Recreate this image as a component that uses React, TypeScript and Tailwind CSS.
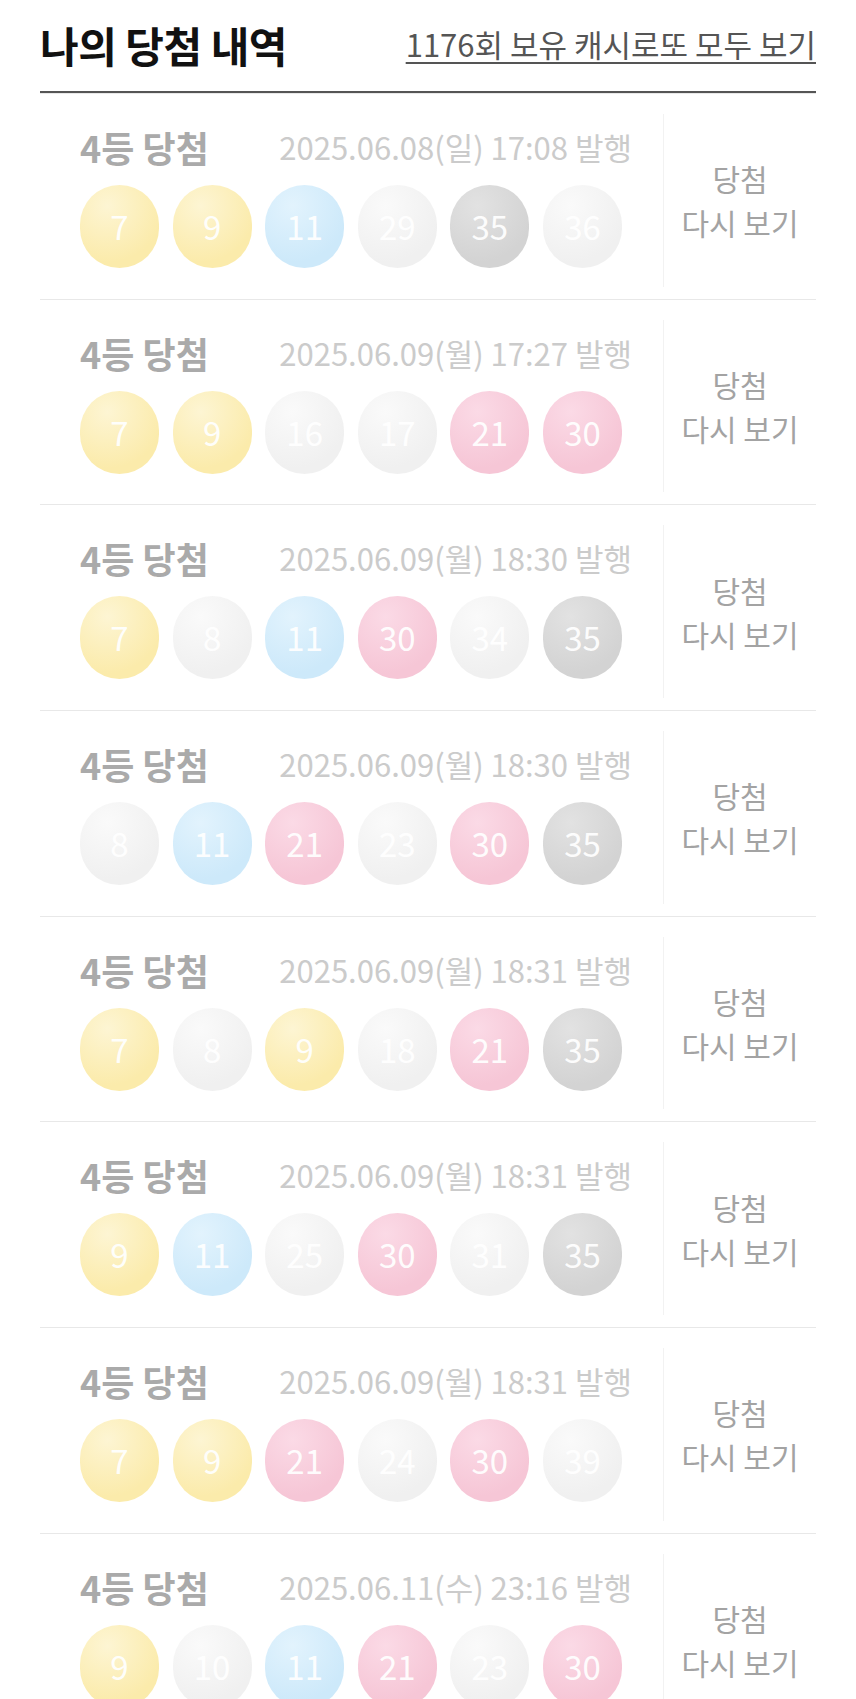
import React from "react";

const rows: { date: string; balls: number[] }[] = [
  { date: "2025.06.08(일) 17:08 발행", balls: [7, 9, 11, 29, 35, 36] },
  { date: "2025.06.09(월) 17:27 발행", balls: [7, 9, 16, 17, 21, 30] },
  { date: "2025.06.09(월) 18:30 발행", balls: [7, 8, 11, 30, 34, 35] },
  { date: "2025.06.09(월) 18:30 발행", balls: [8, 11, 21, 23, 30, 35] },
  { date: "2025.06.09(월) 18:31 발행", balls: [7, 8, 9, 18, 21, 35] },
  { date: "2025.06.09(월) 18:31 발행", balls: [9, 11, 25, 30, 31, 35] },
  { date: "2025.06.09(월) 18:31 발행", balls: [7, 9, 21, 24, 30, 39] },
  { date: "2025.06.11(수) 23:16 발행", balls: [9, 10, 11, 21, 23, 30] },
];

const winning = [7, 9, 11, 21, 30, 35];

function ballClass(n: number): string {
  if (!winning.includes(n))
    return "bg-[radial-gradient(circle_at_35%_25%,#fafafa,#f0f0f0_70%)]";
  if (n <= 10) return "bg-[radial-gradient(circle_at_35%_25%,#fdf5d3,#fbebab_70%)]";
  if (n <= 20) return "bg-[radial-gradient(circle_at_35%_25%,#e2f3fd,#cde9fa_70%)]";
  if (n <= 30) return "bg-[radial-gradient(circle_at_35%_25%,#fbdae6,#f6c6d6_70%)]";
  return "bg-[radial-gradient(circle_at_35%_25%,#e2e2e2,#d3d3d3_70%)]";
}

function LottoBall({ n }: { n: number }) {
  return (
    <div
      className={`flex h-[83px] w-[79px] items-center justify-center rounded-full text-[33px] leading-none text-white/95 ${ballClass(n)}`}
    >
      {n}
    </div>
  );
}

export default function App() {
  return (
    <div
      className="min-h-[1699px] bg-white px-[40px]"
      style={{ fontFamily: '"Noto Sans CJK KR", "Noto Sans", sans-serif' }}
    >
      <div className="flex h-[91px] items-center justify-between pb-[2px]">
        <h1 className="text-[42px] font-bold tracking-[-0.5px] text-[#111]">나의 당첨 내역</h1>
        <a className="text-[31px] text-[#555] underline decoration-[2px] underline-offset-[5px]">
          1176회 보유 캐시로또 모두 보기
        </a>
      </div>
      <div className="h-[2px] bg-[#555]" />
      <div className="h-[1px] bg-[#e8e8e8]" />
      {rows.map((r, i) => (
        <div key={i} className="flex h-[205.67px] border-b-[1.5px] border-[#e8e8e8]">
          <div className="flex flex-1 flex-col pl-[40px] pr-[31px] pt-[31px]">
            <div className="flex items-center justify-between">
              <span className="text-[36px] font-bold leading-[44px] text-[#aaa]">4등 당첨</span>
              <span className="text-[31px] leading-[44px] text-[#cbcbcb]">{r.date}</span>
            </div>
            <div className="mt-[16px] flex gap-[13.6px]">
              {r.balls.map((b, j) => (
                <LottoBall key={j} n={b} />
              ))}
            </div>
          </div>
          <div className="mb-[12px] mt-[20px] flex w-[153px] flex-col items-center justify-center border-l border-[#f2f2f2] text-[30px] leading-[44px] text-[#a3a3a3]">
            <span>당첨</span>
            <span>다시 보기</span>
          </div>
        </div>
      ))}
    </div>
  );
}
